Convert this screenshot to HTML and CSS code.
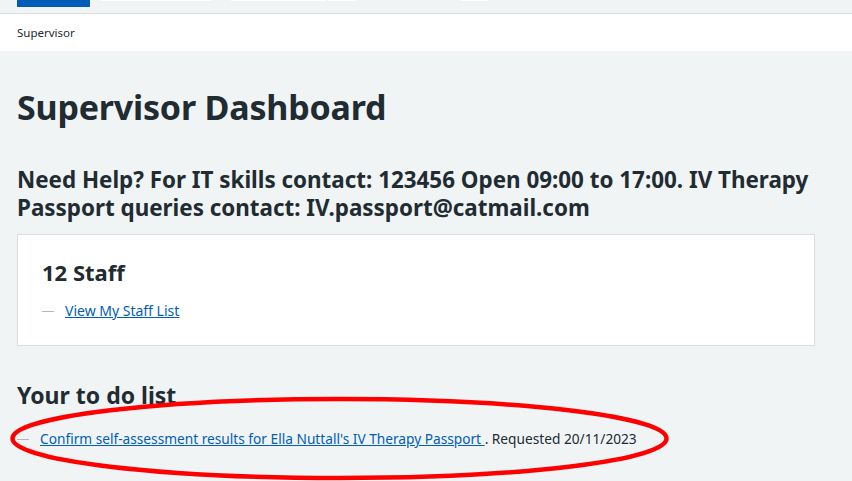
FILE: index.html
```html
<!DOCTYPE html>
<html lang="en">
<head>
<meta charset="utf-8">
<title>Supervisor Dashboard</title>
<link rel="stylesheet" href="styles.css">
</head>
<body>
<header class="topbar">
  <span class="nav-active"></span>
  <span class="nav-stub stub-a"></span>
  <span class="nav-stub stub-b"></span>
  <span class="nav-stub stub-c"></span>
  <span class="nav-stub stub-d"></span>
</header>
<nav class="breadcrumb">Supervisor</nav>
<main class="main">
  <h1 class="title">Supervisor Dashboard</h1>
  <h2 class="help">Need Help? For IT skills contact: 123456 Open 09:00 to 17:00. IV Therapy Passport queries contact: IV.passport@catmail.com</h2>
  <section class="card">
    <h2 class="card-title">12 Staff</h2>
    <ul class="dash-list">
      <li><a href="#">View My Staff List</a></li>
    </ul>
  </section>
  <h2 class="section-title">Your to do list</h2>
  <ul class="dash-list todo">
    <li><a href="#">Confirm self-assessment results for Ella Nuttall's IV Therapy Passport </a>. Requested 20/11/2023</li>
  </ul>
</main>
<svg class="annotation" width="852" height="481" viewBox="0 0 852 481">
  <ellipse cx="339.5" cy="438.5" rx="327" ry="39.5" fill="none" stroke="#ff0000" stroke-width="4.5"/>
</svg>
</body>
</html>
```

FILE: styles.css
```css
html, body {
  margin: 0;
  padding: 0;
}
body {
  background: #f0f4f5;
  color: #212b32;
  font-family: "Noto Sans", "Open Sans", sans-serif;
  width: 852px;
  height: 481px;
  overflow: hidden;
  position: relative;
}
.topbar {
  height: 13px;
  background: #f0f4f5;
  border-bottom: 1px solid #d8dde0;
  display: flex;
  align-items: flex-start;
}
.nav-active {
  display: block;
  width: 73px;
  height: 7px;
  margin-left: 17px;
  background: #005eb8;
}
.nav-stub {
  display: block;
  height: 1px;
  background: #ffffff;
}
.stub-a { width: 110px; margin-left: 11px; }
.stub-b { width: 95px; margin-left: 20px; }
.stub-c { width: 28px; margin-left: 2px; }
.stub-d { width: 27px; margin-left: 105px; }
.breadcrumb {
  background: #ffffff;
  height: 37px;
  line-height: 37px;
  padding-left: 17px;
  font-size: 11.5px;
}
.main {
  width: 798px;
  padding: 0 17px;
}
.title {
  font-size: 34px;
  font-weight: 700;
  line-height: 44px;
  margin: 34px 0 0;
  letter-spacing: -0.2px;
}
.help {
  font-size: 22.4px;
  font-weight: 700;
  line-height: 28px;
  margin: 37px 0 0;
}
.card {
  background: #ffffff;
  border: 1px solid #d8dde0;
  margin-top: 12px;
  padding: 22px 24px 23px;
}
.card-title {
  font-size: 22px;
  font-weight: 700;
  line-height: 30px;
  margin: 0 0 13px;
}
.dash-list {
  list-style: none;
  margin: 0;
  padding: 0;
  font-size: 14px;
  line-height: 22px;
}
.dash-list li {
  display: flex;
  align-items: center;
}
.dash-list li::before {
  content: "";
  display: inline-block;
  width: 12px;
  height: 1px;
  background: #aeb7bd;
  margin-right: 11px;
  flex: none;
}
.dash-list a {
  color: #005eb8;
  text-decoration: underline;
  white-space: pre;
}
.todo {
  font-size: 13.7px;
}
.section-title {
  font-size: 23px;
  font-weight: 700;
  line-height: 30px;
  margin: 34px 0 18px;
}
.annotation {
  position: absolute;
  left: 0;
  top: 0;
  pointer-events: none;
}
```
